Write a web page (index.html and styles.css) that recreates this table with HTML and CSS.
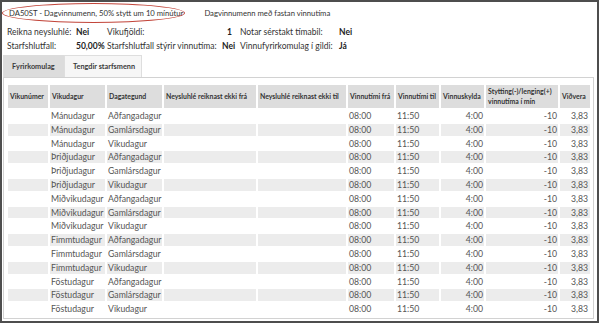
FILE: index.html
```html
<!DOCTYPE html>
<html lang="is">
<head>
<meta charset="utf-8">
<title>Fyrirkomulag</title>
<link rel="stylesheet" href="styles.css">
</head>
<body>
<div class="frame">
  <div class="doc-tabs">
    <span class="doc-tab doc-tab-first">DA50ST - Dagvinnumenn, 50% stytt um 10 mínútur</span>
    <span class="doc-tab">Dagvinnumenn með fastan vinnutíma</span>
    <span class="mark"></span>
  </div>

  <div class="info">
    <span class="lbl">Reikna neysluhlé:</span><span class="val">Nei</span>
    <span class="lbl">Vikufjöldi:</span><span class="val num">1</span>
    <span class="lbl">Notar sérstakt tímabil:</span><span class="val">Nei</span>
    <span class="lbl">Starfshlutfall:</span><span class="val">50,00%</span>
    <span class="lbl">Starfshlutfall stýrir vinnutíma:</span><span class="val">Nei</span>
    <span class="lbl">Vinnufyrirkomulag í gildi:</span><span class="val">Já</span>
  </div>

  <div class="tabs">
    <div class="tab tab-active">Fyrirkomulag</div>
    <div class="tab tab-second">Tengdir starfsmenn</div>
  </div>

  <div class="panel">
    <table class="grid">
      <colgroup>
        <col class="c-wk"><col class="c-day"><col class="c-type"><col class="c-nfra"><col class="c-ntil">
        <col class="c-vfra"><col class="c-vtil"><col class="c-skyl"><col class="c-styt"><col class="c-vid">
      </colgroup>
      <thead>
        <tr>
          <th>Vikunúmer</th><th>Vikudagur</th><th>Dagategund</th>
          <th>Neysluhlé reiknast ekki frá</th><th>Neysluhlé reiknast ekki til</th>
          <th>Vinnutími frá</th><th>Vinnutími til</th><th>Vinnuskylda</th>
          <th class="wrap">Stytting(-)/lenging(+) vinnutíma í mín</th><th>Viðvera</th>
        </tr>
      </thead>
      <tbody>
        <tr><td></td><td>Mánudagur</td><td>Aðfangadagur</td><td></td><td></td><td>08:00</td><td>11:50</td><td class="r">4:00</td><td class="r">-10</td><td class="r last">3,83</td></tr>
        <tr><td></td><td>Mánudagur</td><td>Gamlársdagur</td><td></td><td></td><td>08:00</td><td>11:50</td><td class="r">4:00</td><td class="r">-10</td><td class="r last">3,83</td></tr>
        <tr><td></td><td>Mánudagur</td><td>Vikudagur</td><td></td><td></td><td>08:00</td><td>11:50</td><td class="r">4:00</td><td class="r">-10</td><td class="r last">3,83</td></tr>
        <tr><td></td><td>Þriðjudagur</td><td>Aðfangadagur</td><td></td><td></td><td>08:00</td><td>11:50</td><td class="r">4:00</td><td class="r">-10</td><td class="r last">3,83</td></tr>
        <tr><td></td><td>Þriðjudagur</td><td>Gamlársdagur</td><td></td><td></td><td>08:00</td><td>11:50</td><td class="r">4:00</td><td class="r">-10</td><td class="r last">3,83</td></tr>
        <tr><td></td><td>Þriðjudagur</td><td>Vikudagur</td><td></td><td></td><td>08:00</td><td>11:50</td><td class="r">4:00</td><td class="r">-10</td><td class="r last">3,83</td></tr>
        <tr><td></td><td>Miðvikudagur</td><td>Aðfangadagur</td><td></td><td></td><td>08:00</td><td>11:50</td><td class="r">4:00</td><td class="r">-10</td><td class="r last">3,83</td></tr>
        <tr><td></td><td>Miðvikudagur</td><td>Gamlársdagur</td><td></td><td></td><td>08:00</td><td>11:50</td><td class="r">4:00</td><td class="r">-10</td><td class="r last">3,83</td></tr>
        <tr><td></td><td>Miðvikudagur</td><td>Vikudagur</td><td></td><td></td><td>08:00</td><td>11:50</td><td class="r">4:00</td><td class="r">-10</td><td class="r last">3,83</td></tr>
        <tr><td></td><td>Fimmtudagur</td><td>Aðfangadagur</td><td></td><td></td><td>08:00</td><td>11:50</td><td class="r">4:00</td><td class="r">-10</td><td class="r last">3,83</td></tr>
        <tr><td></td><td>Fimmtudagur</td><td>Gamlársdagur</td><td></td><td></td><td>08:00</td><td>11:50</td><td class="r">4:00</td><td class="r">-10</td><td class="r last">3,83</td></tr>
        <tr><td></td><td>Fimmtudagur</td><td>Vikudagur</td><td></td><td></td><td>08:00</td><td>11:50</td><td class="r">4:00</td><td class="r">-10</td><td class="r last">3,83</td></tr>
        <tr><td></td><td>Föstudagur</td><td>Aðfangadagur</td><td></td><td></td><td>08:00</td><td>11:50</td><td class="r">4:00</td><td class="r">-10</td><td class="r last">3,83</td></tr>
        <tr><td></td><td>Föstudagur</td><td>Gamlársdagur</td><td></td><td></td><td>08:00</td><td>11:50</td><td class="r">4:00</td><td class="r">-10</td><td class="r last">3,83</td></tr>
        <tr><td></td><td>Föstudagur</td><td>Vikudagur</td><td></td><td></td><td>08:00</td><td>11:50</td><td class="r">4:00</td><td class="r">-10</td><td class="r last">3,83</td></tr>
      </tbody>
    </table>
  </div>
</div>
</body>
</html>
```

FILE: styles.css
```css
* { box-sizing: border-box; }

html, body {
  margin: 0;
  padding: 0;
  background: #ffffff;
}

body {
  font-family: Lato, "Open Sans", "Liberation Sans", sans-serif;
  color: #333333;
}

.frame {
  position: relative;
  width: 599px;
  height: 323px;
  border: 2px solid #4e4e4e;
  padding: 0 3px 0 1px;
  overflow: hidden;
}

/* document tabs at top */
.doc-tabs {
  display: flex;
  align-items: center;
  height: 21px;
  padding-left: 6px;
  font-size: 7.7px;
  color: #333333;
  white-space: nowrap;
}

.doc-tab-first {
  margin-right: 21px;
}

.mark {
  position: absolute;
  left: 0px;
  top: 1px;
  width: 183px;
  height: 20px;
  border: 1.5px solid #c2453a;
  border-radius: 50%;
  pointer-events: none;
}

/* info grid */
.info {
  display: grid;
  grid-template-columns: 69px 31px 115px 18px 99px auto;
  grid-auto-rows: 14px;
  align-items: center;
  margin-top: 2px;
  padding-left: 4px;
  font-size: 8.5px;
  color: #333333;
  white-space: nowrap;
}

.val {
  font-weight: 700;
  color: #222222;
}

.val.num {
  text-align: right;
  padding-right: 8px;
}

/* tabs */
.tabs {
  display: flex;
  margin-top: 2px;
  height: 22px;
}

.tab {
  display: flex;
  align-items: center;
  padding: 0 8px;
  font-size: 7.3px;
  font-weight: 700;
  color: #3a3a3a;
  background: #f6f6f6;
  border: 1px solid #dedede;
  border-bottom: none;
  white-space: nowrap;
}

.tab-active {
  background: #dcdcdc;
  border-color: #dcdcdc;
  width: 61px;
}

.tab-second {
  width: 78px;
}

/* panel */
.panel {
  height: 242px;
  border: 1px solid #d2d2d2;
  padding: 5px 0 0 2px;
}

.grid {
  table-layout: fixed;
  width: 586px;
  border-collapse: separate;
  border-spacing: 2px;
}

.c-wk { width: 40px; }
.c-day { width: 55px; }
.c-type { width: 55px; }
.c-nfra { width: 92px; }
.c-ntil { width: 88px; }
.c-vfra { width: 46px; }
.c-vtil { width: 43px; }
.c-skyl { width: 43px; }
.c-styt { width: 72px; }
.c-vid { width: 30px; }

.grid th {
  height: 23px;
  padding: 0 2px;
  background: #dddddd;
  font-size: 6.9px;
  line-height: 9.5px;
  font-weight: 700;
  color: #333333;
  text-align: left;
  vertical-align: middle;
  white-space: nowrap;
  overflow: hidden;
}

.grid th.wrap {
  white-space: normal;
}

.grid td {
  height: 11.8px;
  padding: 0 1px;
  font-size: 8.7px;
  line-height: 11.8px;
  color: #555555;
  white-space: nowrap;
  overflow: hidden;
}

.grid tbody tr:nth-child(even) td {
  background: #ececec;
}

.grid td.r {
  text-align: right;
}

.grid td.last {
  padding-right: 2px;
}
```
